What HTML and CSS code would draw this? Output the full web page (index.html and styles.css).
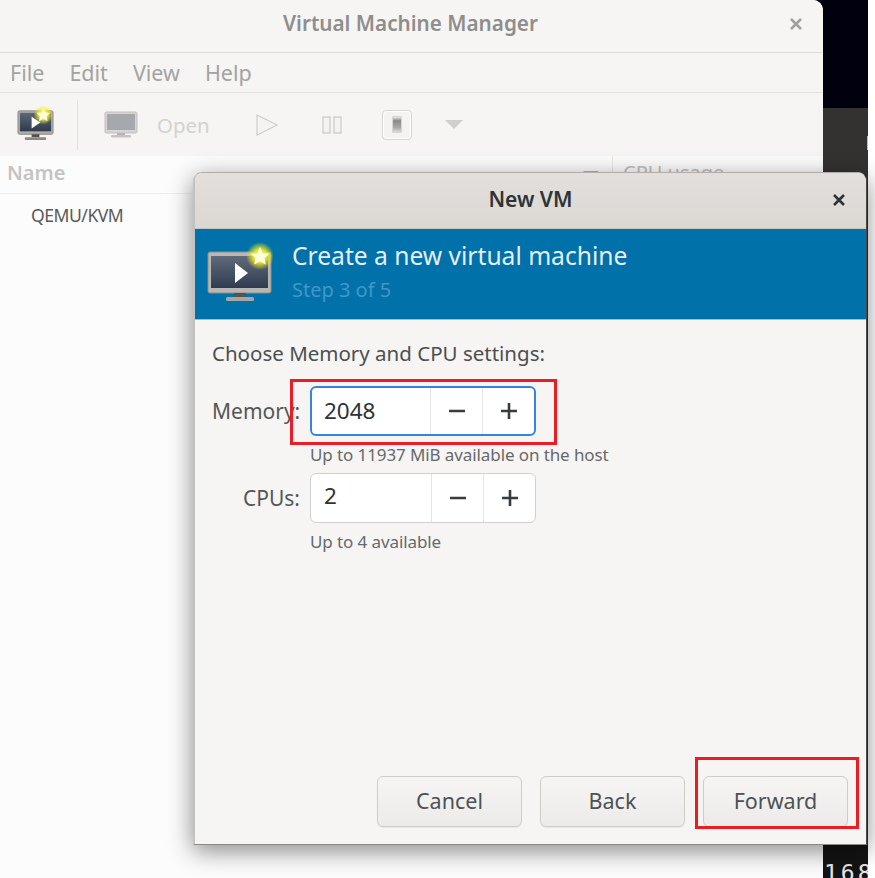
FILE: index.html
```html
<!DOCTYPE html>
<html lang="en">
<head>
<meta charset="utf-8">
<title>New VM</title>
<link rel="stylesheet" href="styles.css">
</head>
<body>
<div class="desktop">
  <div class="bg-top"></div>
  <div class="bg-mid"><span class="bg-mark"></span></div>
  <div class="bg-term"><span class="term-text">168</span></div>
  <div class="bg-strip"></div>

  <section class="win-main">
    <header class="main-title">
      <span class="main-title-text">Virtual Machine Manager</span>
      <svg class="close close-main" viewBox="0 0 14 14"><path d="M2 2l10 10M12 2L2 12"/></svg>
    </header>
    <nav class="menu">
      <span>File</span><span>Edit</span><span>View</span><span>Help</span>
    </nav>
    <div class="toolbar">
      <svg class="tool-new" viewBox="0 0 38 38">
        <defs>
          <linearGradient id="scr" x1="0" y1="0" x2="0" y2="1"><stop offset="0" stop-color="#5c6878"/><stop offset="1" stop-color="#2f3b4d"/></linearGradient>
          <radialGradient id="glow"><stop offset="0.4" stop-color="#f4f020"/><stop offset="1" stop-color="#f4f020" stop-opacity="0"/></radialGradient>
        </defs>
        <rect x="1" y="5" width="36" height="24" rx="1.5" fill="#b0aeaa" stroke="#8b8985"/>
        <rect x="3" y="7" width="32" height="19" fill="url(#scr)"/>
        <path d="M15 11l9 6-9 6z" fill="#fff"/>
        <rect x="15" y="29" width="8" height="3" fill="#55534f"/>
        <rect x="8" y="32" width="22" height="3" rx="1" fill="#8b8985"/>
        <circle cx="27" cy="9" r="10" fill="url(#glow)"/>
        <path d="M27 2l2.1 4.6 5 .6-3.7 3.4 1 5-4.4-2.5-4.4 2.5 1-5-3.7-3.4 5-.6z" fill="#fffde0"/>
      </svg>
      <span class="tool-sep"></span>
      <div class="tool-open">
        <svg class="tool-monitor" viewBox="0 0 34 30">
          <rect x="1" y="2" width="32" height="21" rx="1.5" fill="#d6d5d3" stroke="#c0bfbd"/>
          <rect x="3" y="4" width="28" height="16" fill="#a5a9ae"/>
          <rect x="13" y="23" width="8" height="2" fill="#b5b4b2"/>
          <rect x="7" y="25" width="20" height="2.5" rx="1" fill="#c4c3c1"/>
        </svg>
        <span class="open-label">Open</span>
      </div>
      <svg class="tool-play" viewBox="0 0 22 24"><path d="M1 2l20 10L1 22z"/></svg>
      <svg class="tool-pause" viewBox="0 0 20 18"><rect x="1" y="1" width="7" height="16"/><rect x="12" y="1" width="7" height="16"/></svg>
      <span class="tool-stop"><span class="tool-stop-inner"></span></span>
      <span class="tool-caret"></span>
    </div>
    <div class="list-head">
      <span class="col-name">Name</span>
      <span class="col-arrow"></span>
      <span class="col-cpu">CPU usage</span>
    </div>
    <div class="list-row">QEMU/KVM</div>
  </section>

  <section class="dialog">
    <header class="dlg-title">
      <span class="dlg-title-text">New VM</span>
      <svg class="close close-dlg" viewBox="0 0 14 14"><path d="M2 2l10 10M12 2L2 12"/></svg>
    </header>
    <div class="banner">
      <svg class="banner-icon" viewBox="0 0 66 62">
        <defs>
          <linearGradient id="scr2" x1="0" y1="0" x2="0" y2="1"><stop offset="0" stop-color="#5f6b7b"/><stop offset="1" stop-color="#2f3c50"/></linearGradient>
          <radialGradient id="glow2"><stop offset="0.45" stop-color="#e8e820"/><stop offset="1" stop-color="#e8e820" stop-opacity="0"/></radialGradient>
        </defs>
        <rect x="1" y="10" width="63" height="41" rx="2" fill="#b9b7b3" stroke="#8f8d89"/>
        <rect x="4" y="14" width="57" height="32" fill="url(#scr2)"/>
        <path d="M28 21l13 10-13 10z" fill="#fff"/>
        <rect x="27" y="51" width="12" height="4" fill="#55534f"/>
        <rect x="19" y="55" width="28" height="4" rx="1.5" fill="#a8a6a2"/>
        <circle cx="53" cy="14" r="14" fill="url(#glow2)"/>
        <path d="M53 5l2.8 6 6.5.8-4.8 4.4 1.3 6.4-5.8-3.2-5.8 3.2 1.3-6.4-4.8-4.4 6.5-.8z" fill="#fffde0"/>
      </svg>
      <div class="banner-text">
        <div class="banner-head">Create a new virtual machine</div>
        <div class="banner-step">Step 3 of 5</div>
      </div>
    </div>
    <div class="dlg-body">
      <p class="prompt">Choose Memory and CPU settings:</p>
      <div class="form">
        <label class="field-label">Memory:</label>
        <div class="spin spin-focus">
          <span class="spin-value">2048</span>
          <span class="spin-btn"><svg viewBox="0 0 16 16"><path d="M0 8h16"/></svg></span>
          <span class="spin-btn"><svg viewBox="0 0 16 16"><path d="M0 8h16M8 0v16"/></svg></span>
        </div>
        <span class="hint hint-mem">Up to 11937 MiB available on the host</span>
        <label class="field-label">CPUs:</label>
        <div class="spin">
          <span class="spin-value">2</span>
          <span class="spin-btn"><svg viewBox="0 0 16 16"><path d="M0 8h16"/></svg></span>
          <span class="spin-btn"><svg viewBox="0 0 16 16"><path d="M0 8h16M8 0v16"/></svg></span>
        </div>
        <span class="hint hint-cpu">Up to 4 available</span>
      </div>
      <div class="actions">
        <button class="btn">Cancel</button>
        <button class="btn">Back</button>
        <button class="btn">Forward</button>
      </div>
    </div>
  </section>

  <div class="mark mark-mem"></div>
  <div class="mark mark-fwd"></div>
</div>
</body>
</html>
```

FILE: styles.css
```css
* { box-sizing: border-box; }
html, body { margin: 0; padding: 0; }
body { width: 875px; height: 878px; overflow: hidden; background: #fff; font-family: "Noto Sans", "Open Sans", sans-serif; }

.desktop { position: relative; width: 875px; height: 878px; overflow: hidden; background: #fff; }
.bg-top { position: absolute; left: 800px; top: 0; width: 68px; height: 108px; background: #00000e; }
.bg-mid { position: absolute; left: 800px; top: 108px; width: 68px; height: 737px; background: #333231; }
.bg-mark { position: absolute; left: 67px; top: 28px; width: 1px; height: 14px; background: #bbb; }
.bg-term { position: absolute; left: 800px; top: 845px; width: 68px; height: 33px; background: #141414; overflow: hidden; }
.term-text { position: absolute; left: 24px; top: 13px; font-size: 23px; letter-spacing: 3px; line-height: 30px; color: #e8e8e8; font-family: "DejaVu Sans Mono", monospace; }
.bg-strip { position: absolute; left: 868px; top: 0; width: 7px; height: 878px; background: #fff; }

.win-main { position: absolute; left: 0; top: 0; width: 823px; height: 878px; background: #fcfcfc; border-top-right-radius: 10px; display: flex; flex-direction: column; overflow: hidden; }
.main-title { position: relative; height: 53px; flex: none; background: #f6f5f4; border-bottom: 1px solid #dedcda; display: flex; align-items: center; justify-content: center; padding-bottom: 7px; }
.main-title-text { font-size: 20.7px; font-weight: 600; color: #8e8e8c; padding-right: 2px; }
.close { fill: none; stroke-linecap: butt; }
.close-main { position: absolute; right: 20px; top: 17px; width: 14px; height: 14px; stroke: #a0a09e; stroke-width: 2.6; }

.menu { height: 40px; flex: none; display: flex; align-items: center; gap: 25px; padding: 0 10px; background: #f6f5f4; border-bottom: 1px solid #e4e2e0; font-size: 21.5px; color: #a3a3a1; }
.toolbar { height: 63px; flex: none; background: #f6f5f4; display: flex; align-items: center; padding-left: 17px; }
.tool-new { width: 37px; height: 37px; flex: none; }
.tool-sep { width: 1px; height: 50px; background: #e2e0de; margin-left: 23px; flex: none; }
.tool-open { display: flex; align-items: center; margin-left: 26px; }
.tool-monitor { width: 34px; height: 30px; flex: none; }
.open-label { margin-left: 19px; font-size: 20.4px; color: #d3d2d0; }
.tool-play { width: 22px; height: 24px; margin-left: 46px; fill: #f4f3f2; stroke: #cfcecc; stroke-width: 1.2; flex: none; }
.tool-pause { width: 20px; height: 18px; margin-left: 44px; fill: #f4f3f2; stroke: #c9c8c6; stroke-width: 1.2; flex: none; }
.tool-stop { width: 30px; height: 30px; margin-left: 40px; border: 1px solid #d6d5d3; border-radius: 4px; background: #f4f3f2; box-shadow: inset 0 0 0 1px #fff; display: flex; align-items: center; justify-content: center; flex: none; }
.tool-stop-inner { width: 10px; height: 17px; border-radius: 1px; background: linear-gradient(#e8e7e6 0, #8a8987 25%, #a9a8a6 70%, #dcdbda 100%); border: 1px solid #d6d5d3; }
.tool-caret { width: 0; height: 0; margin-left: 33px; border-left: 9px solid transparent; border-right: 9px solid transparent; border-top: 9px solid #d0cfcd; flex: none; }

.list-head { position: relative; height: 38px; flex: none; background: #fcfcfc; border-bottom: 1px solid #f0efee; display: flex; align-items: center; padding-left: 7px; padding-bottom: 4px; font-size: 20px; font-weight: 600; color: #c4c4c2; }
.col-arrow { position: absolute; left: 583px; top: 15px; border-left: 8px solid transparent; border-right: 8px solid transparent; border-top: 6px solid #b3b2b0; }
.col-cpu { position: absolute; left: 612px; top: 0; height: 38px; padding-left: 10px; border-left: 1px solid #e8e7e5; font-weight: 400; line-height: 34px; color: #c0c0be; }
.list-row { height: 46px; flex: none; padding-left: 31px; padding-bottom: 4px; display: flex; align-items: center; font-size: 17.6px; letter-spacing: -0.5px; color: #5a5a58; }

.dialog { position: absolute; left: 193px; top: 172px; width: 674px; height: 673px; background: #f6f5f4; border-left: 2px solid #c4c2bf; border-right: 1px solid #4a4948; border-top: 1px solid #b0aeab; border-bottom: 1px solid #8c8a87; border-radius: 9px 9px 0 0; box-shadow: 0 6px 24px rgba(0,0,0,.46); display: flex; flex-direction: column; overflow: hidden; }
.dlg-title { position: relative; height: 56px; flex: none; background: linear-gradient(#e3dfdc, #dbd7d3); border-bottom: 1px solid #c8c4bf; display: flex; align-items: center; justify-content: center; padding-bottom: 4px; }
.dlg-title-text { font-size: 21px; font-weight: 600; color: #2e3436; }
.close-dlg { position: absolute; right: 20px; top: 20px; width: 14px; height: 14px; stroke: #2e3436; stroke-width: 2.6; }

.banner { height: 91px; flex: none; background: #0071a9; display: flex; align-items: center; padding-left: 12px; border-bottom: 1px solid #b9b7b4; }
.banner-icon { width: 66px; height: 62px; flex: none; margin-top: -2px; }
.banner-text { margin-left: 19px; margin-top: -2px; }
.banner-head { font-size: 24.6px; line-height: 30px; color: #e6eff5; }
.banner-step { font-size: 20px; line-height: 30px; margin-top: 4px; color: #4496c7; }

.dlg-body { flex: 1; min-height: 0; display: flex; flex-direction: column; padding: 19px 18px 17px 17px; }
.prompt { margin: 0; font-size: 20.5px; line-height: 28px; color: #4c4f50; }
.form { display: grid; grid-template-columns: 88px 226px; column-gap: 10px; margin-top: 19px; align-items: center; }
.field-label { font-size: 21px; line-height: 28px; color: #555755; text-align: right; }
.spin { height: 50px; display: flex; background: #fff; border: 1px solid #d3cfca; border-radius: 6px; overflow: hidden; }
.spin-focus { border: 2px solid #3584e4; }
.spin-value { flex: 1; padding-left: 13px; font-size: 22.5px; line-height: 44px; color: #2e3436; }
.spin-focus .spin-value { padding-left: 12px; line-height: 46px; }
.spin-btn { width: 52px; flex: none; border-left: 1px solid #e8e6e4; display: flex; align-items: center; justify-content: center; }
.spin-focus .spin-btn:first-of-type { width: 53px; }
.spin-btn svg { width: 16px; height: 16px; fill: none; stroke: #363c3f; stroke-width: 2.6; }
.hint { grid-column: 2; font-size: 17px; line-height: 24px; color: #66696a; white-space: nowrap; letter-spacing: -0.1px; }
.hint-mem { margin-top: 7px; margin-bottom: 6px; }
.hint-cpu { margin-top: 7px; }

.actions { margin-top: auto; display: flex; justify-content: flex-end; gap: 18px; }
.btn { width: 145px; height: 51px; border: 1px solid #d0ccc7; border-radius: 6px; background: linear-gradient(#f6f5f4, #edebe9); box-shadow: 0 1px 1px rgba(0,0,0,.06); font-family: inherit; font-size: 21.5px; color: #4d5254; padding: 0 0 3px; }

.mark { position: absolute; border: 3px solid #ec1c24; pointer-events: none; }
.mark-mem { left: 290px; top: 379px; width: 267px; height: 66px; }
.mark-fwd { left: 695px; top: 757px; width: 164px; height: 72px; }
```
